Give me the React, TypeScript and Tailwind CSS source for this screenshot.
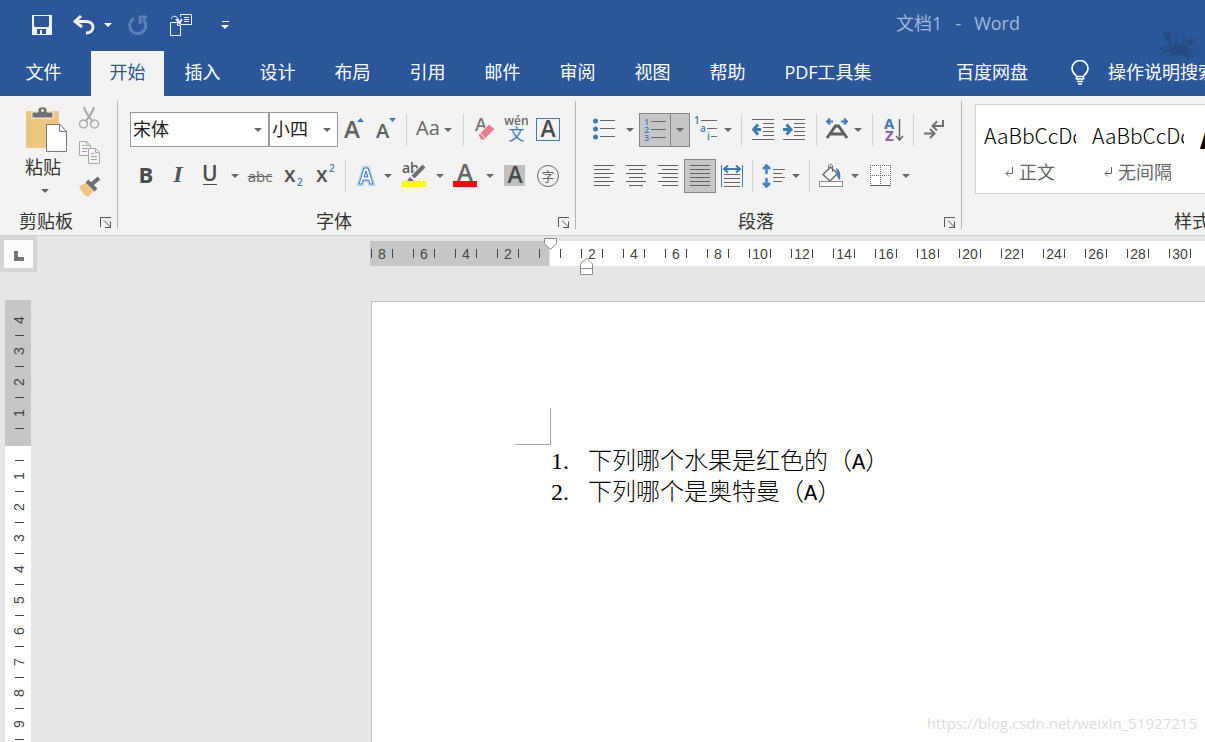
import type { ReactNode } from "react";
import clsx from "clsx";

const tabs = ["插入", "设计", "布局", "引用", "邮件", "审阅", "视图", "帮助"];

const rulerMarks = [
  "8", "", "6", "", "4", "", "2", "", "", "", "2", "", "4", "", "6", "", "8", "",
  "10", "", "12", "", "14", "", "16", "", "18", "", "20", "", "22", "", "24", "",
  "26", "", "28", "", "30", "", "32", "", "34", "", "36", "", "38", "", "40",
];

const questions = ["下列哪个水果是红色的", "下列哪个是奥特曼"];

const Caret = ({ className }: { className?: string }) => (
  <svg width="8" height="4" viewBox="0 0 8 4" className={clsx("shrink-0 fill-current", className)}>
    <path d="M0 0h8L4 4z" />
  </svg>
);

type ToolProps = {
  label: string;
  className?: string;
  active?: boolean;
  children: ReactNode;
};

const Tool = ({ label, className = "w-8", active, children }: ToolProps) => (
  <button
    type="button"
    title={label}
    aria-label={label}
    aria-pressed={active}
    className={clsx(
      "flex h-[34px] shrink-0 items-center justify-center text-[#666]",
      className,
      active && "border border-[#868686] bg-[#c6c6c6]",
    )}
  >
    {children}
  </button>
);

const CaretTool = ({ label, className = "w-3", active }: { label: string; className?: string; active?: boolean }) => (
  <Tool label={label} className={className} active={active}>
    <Caret />
  </Tool>
);

const Separator = ({ className }: { className: string }) => (
  <div className={clsx("flex h-8 shrink-0 justify-center", className)}>
    <i className="w-px bg-[#d0d0d0]" />
  </div>
);

const Lines = ({ rows }: { rows: [number, number][] }) => (
  <svg width="20" height="21" viewBox="0 0 20 21" shapeRendering="crispEdges" fill="#5f5f5f">
    {rows.map(([x, w], i) => (
      <rect key={i} x={x} y={i * 4} width={w} height="1" />
    ))}
  </svg>
);

const Launcher = ({ label }: { label: string }) => (
  <button type="button" aria-label={label} className="absolute right-[6px] top-[10px]">
    <svg width="12" height="11" viewBox="0 0 12 11" fill="none" stroke="#555">
      <path d="M.5 10V.5H11M4 3.500l6.500 6.500M10.500 4.500v6M5 10.500h6" />
    </svg>
  </button>
);

const Group = ({ name, launcher, className, children }: { name: string; launcher?: string; className: string; children: ReactNode }) => (
  <section aria-label={name} className={clsx("relative flex shrink-0 flex-col", className)}>
    <div className="flex-1">{children}</div>
    <footer className="relative flex h-7 items-center justify-center">
      <h2 className="text-lg leading-6 text-[#333]">{name}</h2>
      {launcher && <Launcher label={launcher} />}
    </footer>
    <i className="absolute right-0 top-[5px] h-32 w-px bg-[#b4b4b4]" />
  </section>
);

const TitleBar = () => (
  <header className="flex h-[51px] items-center overflow-hidden pb-[2px] pl-6 text-white">
    <button type="button" aria-label="保存" className="flex w-9 justify-center">
      <svg width="20" height="20" viewBox="0 0 20 20" fill="#f0f0f0" fillRule="evenodd">
        <path d="M0 0h20v20H0zM2 1v10l1 1h13l1-1V1zM5 14v5h3v-4h2v4h4v-5z" />
      </svg>
    </button>
    <button type="button" aria-label="撤消" className="ml-[6px] flex w-9 justify-center">
      <svg width="22" height="20" viewBox="0 0 22 20" fill="none" stroke="#f0f0f0" strokeWidth="3">
        <path d="M8 1 2 6.500 9 12M2.500 6.500H13c4 0 7 2 7 5.500s-3 6-7 6" />
      </svg>
    </button>
    <button type="button" aria-label="撤消选项" className="flex w-3 justify-center">
      <Caret />
    </button>
    <button type="button" aria-label="重复" className="ml-[6px] flex w-9 justify-center">
      <svg width="20" height="20" viewBox="0 0 20 20" fill="none" stroke="#5b7fb6" strokeWidth="3">
        <path d="M6 3.500A8 8 0 1 0 15 4.500M12 9V2h7" />
      </svg>
    </button>
    <button type="button" aria-label="粘贴并保留格式" className="ml-[7px] flex w-9 justify-center">
      <svg width="22" height="22" viewBox="0 0 22 22" fill="none" stroke="#f0f0f0">
        <path d="M10.500 3V.500h11v10h-11V9M14 3.500h5M14 5.500h5M14 7.500h5M8 8.500H.5v13h10v-10h-3v-3M1 5c1-4 7-4 8 2" />
        <path d="M6 5l3.500 4L12 5" strokeWidth="2" />
      </svg>
    </button>
    <button type="button" aria-label="自定义快速访问工具栏" className="ml-2 flex w-9 flex-col items-center gap-[3px]">
      <i className="h-px w-[7px] bg-white" />
      <Caret />
    </button>
    <h1 className="ml-auto flex gap-[13px] pb-1 pr-[185px] text-lg leading-6 text-[#a3b8d8]">
      <span>文档1</span>
      <span>-</span>
      <span>Word</span>
    </h1>
  </header>
);

const Crab = () => (
  <svg width="38" height="31" viewBox="0 0 38 31" className="absolute right-2 top-[30px] fill-[#264a82] stroke-[#264a82]">
    <path d="M11 26c0-9 4-14 11-12 6 2 8 6 5 13-5-4-11-4-16-1z" />
    <path d="M6 0c-3 5 0 9 4 11 3-3 2-7-1-10v5zM36 8c-1 5-4 8-9 7 0-4 3-6 6-7l-1 4z" stroke="none" />
    <path d="M9 10l4 6M28 14l-3 4M11 17c-4-1-7 0-10 2M11 20c-4 0-6 1-8 4M28 20c4 1 6 4 5 8M28 23c2 2 2 4 1 7" fill="none" strokeWidth="2" />
    <path d="M17 13V8M24 15l1-4" fill="none" />
    <circle cx="17" cy="6.500" r="2" fill="none" />
    <circle cx="25.500" cy="9.500" r="2" fill="none" />
  </svg>
);

const Tabs = () => (
  <nav className="flex h-[45px] gap-[2px] overflow-hidden whitespace-nowrap pl-[7px] text-lg leading-6 text-white">
    <button type="button" className="w-[73px] shrink-0 pb-[3px]">文件</button>
    <button type="button" className="ml-[9px] w-[73px] shrink-0 bg-[#f3f3f3] pb-[3px] text-[#2b579a]">开始</button>
    {tabs.map((tab) => (
      <button key={tab} type="button" className="w-[73px] shrink-0 pb-[3px]">
        {tab}
      </button>
    ))}
    <button type="button" className="w-[124px] shrink-0 pb-[3px]">PDF工具集</button>
    <button type="button" className="ml-[46px] w-[108px] shrink-0 pb-[3px]">百度网盘</button>
    <button type="button" className="ml-[23px] flex shrink-0 items-center gap-[19px] pb-[3px]">
      <svg width="18" height="25" viewBox="0 0 18 25" fill="none" stroke="currentColor" strokeWidth="1.600">
        <path d="M5.500 19v-3C3.500 14 1 12.500 1 8.500a8 8 0 0 1 16 0c0 4-2.500 5.500-4.500 7.500v3zM5.500 16.500h7M6 21.500h6M7 24h4" />
      </svg>
      操作说明搜索
    </button>
  </nav>
);

const Clipboard = () => (
  <Group name="剪贴板" launcher="剪贴板选项" className="w-[118px] [&_h2]:mr-[26px]">
    <div className="flex pl-6 pt-[9px]">
      <button type="button" className="flex w-11 flex-col items-start text-[#333]">
        <svg width="44" height="48" viewBox="0 0 44 48">
          <rect x="2" y="6" width="33" height="37" rx="1" fill="#eec77f" />
          <path d="M8 13V7h6V4l2-2h5l2 2v3h6v6z" fill="#6f6f6f" stroke="#f3f3f3" />
          <circle cx="18.500" cy="5.500" r="1.500" fill="#f3f3f3" />
          <path d="M22.500 19.500H36l6.500 7v20h-20z" fill="#fff" stroke="#777" />
          <path d="M35.500 19.500v7h7" fill="none" stroke="#777" />
        </svg>
        <span className="flex w-[38px] flex-col items-center gap-2 text-lg leading-7">
          粘贴
          <Caret className="ml-1 text-[#666]" />
        </span>
      </button>
      <div className="ml-[10px] flex flex-col gap-3">
        <button type="button" aria-label="剪切">
          <svg width="22" height="24" viewBox="0 0 22 24" fill="none" stroke="#a8a8a8" strokeWidth="1.500">
            <path d="M6 2c1 5 4 8 8 14l-1 1M16 2c-1 5-4 8-8 14l1 1" strokeWidth="2" />
            <circle cx="5.500" cy="19" r="4" />
            <circle cx="16.500" cy="19" r="4" />
          </svg>
        </button>
        <button type="button" aria-label="复制">
          <svg width="22" height="23" viewBox="0 0 22 23" fill="#f8f3f8" stroke="#aaa5aa">
            <path d="M1.500.5h7l4 4v10h-11zM8.500.5v4h4M4 4.500h3M4 7.500h6M4 10.500h5" />
            <path d="M10.500 7.500h7l4 4v11h-11zM17.500 7.500v4h4M13 12.500h3M13 15.500h6M13 18.500h6" />
          </svg>
        </button>
        <button type="button" aria-label="格式刷">
          <svg width="23" height="21" viewBox="0 0 23 21">
            <path d="M1 10l7-3 8 8-6 6C6 19 3 15 1 10z" fill="#eec586" />
            <path d="M9 5l9 9M13 9l8-7" fill="none" stroke="#6f6f6f" strokeWidth="4" />
          </svg>
        </button>
      </div>
    </div>
  </Group>
);

const letter = "overflow-visible font-['Open_Sans','Noto_Sans_CJK_SC',sans-serif] font-semibold";

type FontSelectProps = { label: string; value: string; options: string[]; className: string };

const FontSelect = ({ label, value, options, className }: FontSelectProps) => (
  <div className={clsx("relative shrink-0", className)}>
    <select
      aria-label={label}
      defaultValue={value}
      className="h-[35px] w-full appearance-none border border-[#999] bg-white pb-[2px] pl-[2px] text-lg leading-6 text-[#222]"
    >
      {options.map((option) => (
        <option key={option}>{option}</option>
      ))}
    </select>
    <Caret className="pointer-events-none absolute right-[7px] top-4 text-[#666]" />
  </div>
);

const FontGroup = () => (
  <Group name="字体" launcher="字体设置" className="w-[458px] [&_h2]:mr-[26px]">
    <div className="flex flex-col gap-[11px] pl-3 pt-4">
      <div className="flex h-[35px] items-center">
        <FontSelect label="字体" value="宋体" options={["宋体", "黑体", "楷体"]} className="w-[139px]" />
        <FontSelect label="字号" value="小四" options={["小四", "四号", "五号"]} className="w-[69px]" />
        <Tool label="增大字号">
          <svg width="20" height="24" viewBox="0 0 20 24" className={letter}>
            <text x="0" y="20" fontSize="24" fill="#5f5f5f">A</text>
            <path d="M13 4h7l-3.500-4z" fill="#3f7ab5" />
          </svg>
        </Tool>
        <Tool label="减小字号">
          <svg width="20" height="24" viewBox="0 0 20 24" className={letter}>
            <text x="0" y="20" fontSize="20" fill="#5f5f5f">A</text>
            <path d="M13 0h7l-3.500 4z" fill="#3f7ab5" />
          </svg>
        </Tool>
        <Separator className="w-[9px]" />
        <Tool label="更改大小写" className="w-[46px] gap-1">
          <span className="pb-1 font-['Open_Sans',sans-serif] text-xl font-medium leading-6">Aa</span>
          <Caret />
        </Tool>
        <Separator className="w-3" />
        <Tool label="清除所有格式">
          <svg width="20" height="24" viewBox="0 0 20 24" className={letter}>
            <text x="0" y="13" fontSize="18" fill="#777">A</text>
            <path d="M3 17 14 6l6 5-11 11H6z" fill="#e87d92" stroke="#f3f3f3" />
            <path d="m5 15 6 6" stroke="#f3f3f3" />
          </svg>
        </Tool>
        <Tool label="拼音指南" className="w-[31px]">
          <span className="flex flex-col items-center pb-[2px]">
            <span className="font-['Open_Sans',sans-serif] text-xs font-semibold leading-[10px]">wén</span>
            <span className="text-base leading-4 text-[#3f7ab5]">文</span>
          </span>
        </Tool>
        <Tool label="字符边框">
          <svg width="24" height="26" viewBox="0 0 24 26" className={letter}>
            <rect x=".5" y="1.500" width="23" height="22" fill="none" stroke="#3f7ab5" />
            <text x="12" y="20" fontSize="23" textAnchor="middle" fill="#4a4a4a">A</text>
          </svg>
        </Tool>
      </div>
      <div className="flex h-[35px] items-center">
        <Tool label="加粗">
          <b className="pb-1 font-['Open_Sans',sans-serif] text-[22px] leading-6 text-[#4a4a4a]">B</b>
        </Tool>
        <Tool label="倾斜">
          <i className="pb-1 font-['Liberation_Serif',serif] text-2xl font-bold leading-6 text-[#555]">I</i>
        </Tool>
        <Tool label="下划线">
          <svg width="16" height="22" viewBox="0 0 16 22" className={letter}>
            <text x="0" y="16" fontSize="21" fill="#4a4a4a">U</text>
            <rect x="1" y="19" width="14" height="1" fill="#4a4a4a" />
          </svg>
        </Tool>
        <CaretTool label="下划线样式" className="w-[18px]" />
        <Tool label="删除线">
          <s className="font-['Open_Sans',sans-serif] text-[15px] leading-6">abc</s>
        </Tool>
        <Tool label="下标">
          <svg width="20" height="24" viewBox="0 0 20 24" className={letter}>
            <text x="2" y="18" fontSize="21" fill="#555">x</text>
            <text x="15" y="22" fontSize="10" fill="#3f7ab5">2</text>
          </svg>
        </Tool>
        <Tool label="上标">
          <svg width="20" height="24" viewBox="0 0 20 24" className={letter}>
            <text x="2" y="18" fontSize="21" fill="#555">x</text>
            <text x="15" y="8" fontSize="10" fill="#3f7ab5">2</text>
          </svg>
        </Tool>
        <Separator className="w-[10px]" />
        <Tool label="文本效果和版式">
          <svg width="24" height="26" viewBox="0 0 24 26">
            <path d="M5 21 10 5h4l5 16h-3l-1-4H9l-1 4zM10 14h4l-2-6z" fill="#fff" stroke="#b8d3ef" strokeWidth="4" />
            <path d="M5 21 10 5h4l5 16h-3l-1-4H9l-1 4zM10 14h4l-2-6z" fill="#fff" stroke="#3f7ac0" />
          </svg>
        </Tool>
        <CaretTool label="文本效果选项" />
        <Tool label="文本突出显示颜色" className="w-10">
          <svg width="24" height="24" viewBox="0 0 24 24" className={letter}>
            <text x="0" y="9" fontSize="14" fill="#555">ab</text>
            <path d="M21 2 11 13" stroke="#f3f3f3" strokeWidth="6" />
            <path d="M22 2 11 13" stroke="#6f6f6f" strokeWidth="4" />
            <path d="m8 13 4 4H5z" fill="#6f6f6f" />
            <rect y="17" width="24" height="6" fill="#ff0" />
          </svg>
        </Tool>
        <CaretTool label="突出显示颜色选项" />
        <Tool label="字体颜色" className="w-[38px]">
          <svg width="24" height="24" viewBox="0 0 24 24" className={letter}>
            <text x="12" y="17" fontSize="24" textAnchor="middle" fill="#666">A</text>
            <rect y="17" width="24" height="6" fill="#f00" />
          </svg>
        </Tool>
        <CaretTool label="字体颜色选项" />
        <Tool label="字符底纹" className="w-[38px]">
          <svg width="22" height="24" viewBox="0 0 22 24" className={letter}>
            <rect y="1" width="21" height="21" fill="#c0c0c0" />
            <text x="11" y="19" fontSize="23" textAnchor="middle" fill="#4a4a4a">A</text>
          </svg>
        </Tool>
        <Tool label="带圈字符" className="w-7">
          <span className="flex h-[22px] w-[22px] items-center justify-center rounded-full border border-[#666] text-[13px] leading-5">
            字
          </span>
        </Tool>
      </div>
    </div>
  </Group>
);

const Indent = ({ arrow }: { arrow: string }) => (
  <svg width="22" height="21" viewBox="0 0 22 21">
    <path d="M0 .5h22M11 4.500h11M11 8.500h11M11 12.500h11M11 16.500h11M0 20.500h22" stroke="#666" />
    <path d={arrow} fill="none" stroke="#3f7ab5" strokeWidth="3" />
  </svg>
);

const Paragraph = () => (
  <Group name="段落" launcher="段落设置" className="w-[386px] [&_h2]:mr-[26px]">
    <div className="flex flex-col gap-[11px] pl-3 pt-4">
      <div className="flex h-[35px] items-center">
        <Tool label="项目符号">
          <svg width="24" height="24" viewBox="0 0 24 24">
            {[3, 11, 19].map((y) => (
              <g key={y}>
                <circle cx="3.500" cy={y} r="2.500" fill="#3f7ab5" />
                <path d={`M8 ${y - 0.5}h15`} stroke="#666" />
              </g>
            ))}
          </svg>
        </Tool>
        <CaretTool label="项目符号库" className="w-[19px]" />
        <Tool label="编号" active>
          <svg width="22" height="26" viewBox="0 0 22 26" className="font-['Open_Sans',sans-serif]">
            {[1, 2, 3].map((n) => (
              <g key={n}>
                <text x="0" y={n * 8} fontSize="9" fontWeight="600" fill="#3f7ab5">{n}</text>
                <path d={`M7 ${n * 8 - 3.5}h15`} stroke="#666" />
              </g>
            ))}
          </svg>
        </Tool>
        <CaretTool label="编号库" className="-ml-px w-5" active />
        <Tool label="多级列表">
          <svg width="24" height="24" viewBox="0 0 24 24" className={letter}>
            <g fontSize="10" fill="#3f7ab5">
              <text x="0" y="6">1</text>
              <text x="6" y="14">a</text>
              <text x="13" y="22">i</text>
            </g>
            <path d="M7 2.500h16M13 10.500h10M17 18.500h6" stroke="#666" />
          </svg>
        </Tool>
        <CaretTool label="多级列表库" />
        <Separator className="w-[14px]" />
        <Tool label="减少缩进量" className="w-[30px]">
          <Indent arrow="M9 10.500H2M6 5.500l-4.500 5 4.500 5" />
        </Tool>
        <Tool label="增加缩进量">
          <Indent arrow="M0 10.500h7M3.500 5.500l4.500 5-4.500 5" />
        </Tool>
        <Separator className="w-3" />
        <Tool label="中文版式" className="w-[30px]">
          <svg width="24" height="24" viewBox="0 0 24 24">
            <path d="M2 20 10.500 8h3L22 20M6 16h12" fill="none" stroke="#5f5f5f" strokeWidth="3" />
            <path d="M8 3.500H2M5 .5l-3 3 3 3M16 3.500h6M19 .5l3 3-3 3" fill="none" stroke="#3f7ab5" strokeWidth="2" />
          </svg>
        </Tool>
        <CaretTool label="中文版式选项" />
        <Separator className="w-4" />
        <Tool label="排序" className="w-7">
          <svg width="20" height="26" viewBox="0 0 20 26" className={letter}>
            <text x="0" y="12" fontSize="15" fontWeight="700" fill="#3f7ab5">A</text>
            <text x="1" y="24" fontSize="15" fontWeight="700" fill="#8c57ab">Z</text>
            <path d="M15.500 2v21M12 19l3.500 4 3.500-4" fill="none" stroke="#666" strokeWidth="1.500" />
          </svg>
        </Tool>
        <Separator className="w-[10px]" />
        <Tool label="显示编辑标记">
          <svg width="22" height="22" viewBox="0 0 22 22" fill="none" stroke="#6f6f6f" strokeWidth="2">
            <path d="M20 1v6H10M14 2.500 9.500 7l4.500 4.500M1 14.500h10M7 10l4.500 4.500L7 19" />
          </svg>
        </Tool>
      </div>
      <div className="flex h-[35px] items-center">
        <Tool label="左对齐">
          <Lines rows={[[0, 20], [0, 16], [0, 20], [0, 16], [0, 20], [0, 16]]} />
        </Tool>
        <Tool label="居中">
          <Lines rows={[[0, 20], [3, 14], [0, 20], [3, 14], [0, 20], [3, 14]]} />
        </Tool>
        <Tool label="右对齐">
          <Lines rows={[[0, 20], [4, 16], [0, 20], [4, 16], [0, 20], [4, 16]]} />
        </Tool>
        <Tool label="两端对齐" active>
          <Lines rows={[[0, 20], [0, 20], [0, 20], [0, 20], [0, 20], [0, 20]]} />
        </Tool>
        <Tool label="分散对齐">
          <svg width="22" height="22" viewBox="0 0 22 22" fill="none">
            <path d="M3 9.500h16M3 13.500h16M3 17.500h16M3 21.500h16" stroke="#666" />
            <path d="M.5 0v22M21.500 0v22" stroke="#3f7ab5" />
            <path d="M3 4h16M7 .5 3 4l4 3.500M15 .5 19 4l-4 3.500" stroke="#3f7ab5" strokeWidth="2" />
          </svg>
        </Tool>
        <Separator className="w-2" />
        <Tool label="行和段落间距" className="w-[34px]">
          <svg width="23" height="24" viewBox="0 0 23 24" fill="none">
            <path d="M11 5.500h12M11 9.500h9M11 13.500h12M11 17.500h9" stroke="#666" />
            <path d="M4.500 2v8M1 5l3.500-3.500L8 5M4.500 14v8M1 19l3.500 3.500L8 19" stroke="#4a7fc4" strokeWidth="2.500" />
          </svg>
        </Tool>
        <CaretTool label="行距选项" />
        <Separator className="w-[14px]" />
        <Tool label="底纹" className="w-[30px]">
          <svg width="24" height="25" viewBox="0 0 24 25" fill="none">
            <path d="M17 5c4 2 5 6 4 12-2-1-3-3-3-6z" fill="#3f7ab5" />
            <path d="M4 11.500 11.500 4l7 6.500L11 18z" fill="#f8f8f8" stroke="#6f6f6f" strokeWidth="1.500" />
            <path d="M9.500 7V2.500q2-3 4 0V9" stroke="#6f6f6f" />
            <rect x=".5" y="18.500" width="23" height="5" fill="#fff" stroke="#8a8a8a" />
          </svg>
        </Tool>
        <CaretTool label="底纹颜色" className="w-[18px]" />
        <Tool label="边框">
          <svg width="21" height="21" viewBox="0 0 21 21" shapeRendering="crispEdges">
            <rect width="21" height="21" fill="#fff" />
            <path d="M0 .5h21M.5 0v20M10.500 0v20M20.500 0v20M0 10.500h21" stroke="#666" strokeDasharray="1 1" />
            <path d="M0 20.500h21" stroke="#555" />
          </svg>
        </Tool>
        <CaretTool label="边框选项" className="w-5" />
      </div>
    </div>
  </Group>
);

type StyleCardProps = { sample: string; name: string; className?: string };

const StyleCard = ({ sample, name, className = "text-[21px] font-light" }: StyleCardProps) => (
  <button type="button" className="flex w-[108px] shrink-0 flex-col px-2 pt-[14px]">
    <span className={clsx("h-8 w-full overflow-hidden whitespace-nowrap text-left font-['Noto_Sans_CJK_SC',sans-serif] leading-8 text-black", className)}>
      {sample}
    </span>
    <span className="flex w-full items-center justify-center gap-[6px] pt-[5px] text-lg leading-8 text-[#666]">
      <svg width="8" height="10" viewBox="0 0 8 10" fill="none" stroke="currentColor">
        <path d="M7.500 0v6.500H1M4 3.500l-3 3 3 3" />
      </svg>
      {name}
    </span>
  </button>
);

const Styles = () => (
  <section aria-label="样式" className="flex min-w-0 flex-1 flex-col overflow-hidden pl-[13px]">
    <div className="flex-1 pt-2">
      <div className="flex h-[90px] overflow-hidden border border-r-0 border-[#cfcfcf] bg-white">
        <StyleCard sample="AaBbCcDd" name="正文" />
        <StyleCard sample="AaBbCcDd" name="无间隔" />
        <StyleCard sample="AaBl" name="标题 1" className="text-[32px] font-bold" />
      </div>
    </div>
    <footer className="flex h-7 items-center pl-[199px]">
      <h2 className="whitespace-nowrap text-lg leading-6 text-[#333]">样式</h2>
    </footer>
  </section>
);

const HorizontalMark = ({ text }: { text: string }) => (
  <span className="flex w-[21px] shrink-0 items-center">
    <i className="h-[9px] w-px bg-[#444]" />
    <span className="flex-1 text-center">{text}</span>
  </span>
);

const HorizontalRuler = () => (
  <div className="relative ml-[333px] mt-[5px] h-[25px] font-['Liberation_Sans',sans-serif] text-sm leading-6 text-[#444]">
    <div className="flex h-full overflow-hidden bg-[linear-gradient(90deg,#c6c6c6_179px,#fff_180px)] pl-px">
      {rulerMarks.map((mark, i) => (
        <HorizontalMark key={i} text={mark} />
      ))}
    </div>
    <svg width="13" height="12" viewBox="0 0 13 12" className="absolute -top-[3px] left-[174px]" fill="#fff" stroke="#8a8a8a">
      <path d="M.5.5h12v5l-6 6-6-6z" />
    </svg>
    <svg width="13" height="18" viewBox="0 0 13 18" className="absolute left-[210px] top-4" fill="#fff" stroke="#8a8a8a">
      <path d="M.5 17.500V7l6-6 6 6v10.500zM.5 11.500h12" />
    </svg>
  </div>
);

const VerticalMark = ({ text }: { text: string }) => (
  <span className="flex h-[31px] shrink-0 flex-col items-center">
    <span className="flex flex-1 items-center justify-center">
      <span className="-rotate-90 leading-[18px]">{text}</span>
    </span>
    <i className="h-px w-[9px] bg-[#444]" />
  </span>
);

const VerticalRuler = () => (
  <div className="ml-[5px] mt-7 flex w-[26px] flex-1 flex-col bg-white font-['Liberation_Sans',sans-serif] text-sm text-[#444]">
    <div className="flex h-[146px] flex-col bg-[#c6c6c6] pl-[2px] pt-[5px]">
      {["4", "3", "2", "1"].map((mark) => (
        <VerticalMark key={mark} text={mark} />
      ))}
    </div>
    <div className="flex flex-col items-center pl-[2px] pt-[14px]">
      <i className="h-px w-[9px] bg-[#444]" />
      {["1", "2", "3", "4", "5", "6", "7", "8", "9"].map((mark) => (
        <VerticalMark key={mark} text={mark} />
      ))}
    </div>
  </div>
);

const Page = () => (
  <article className="ml-[334px] mt-[35px] flex-1 border-l border-t border-[#c0c0c0] bg-white pl-[143px] pt-[106px]">
    <div className="h-[37px] w-9 border-b border-r border-[#a6a6a6]" />
    <ol className="ml-9 font-['Noto_Sans_CJK_SC',sans-serif] text-2xl font-light leading-7 text-black">
      {questions.map((question, i) => (
        <li key={question} className="flex h-[31px] items-baseline whitespace-nowrap">
          <span className="w-[37px] font-['Liberation_Serif',serif]">{i + 1}.</span>
          <span>
            {question}（<span className="font-['Liberation_Mono',monospace] text-[22px] font-normal leading-6">A</span>）
          </span>
        </li>
      ))}
    </ol>
  </article>
);

export default function App() {
  return (
    <div className="relative flex min-h-screen flex-col overflow-hidden bg-[#e6e6e6] font-['Open_Sans','Noto_Sans_CJK_SC',sans-serif]">
      <div className="relative bg-[#2b579a]">
        <TitleBar />
        <Tabs />
        <Crab />
      </div>
      <div className="flex h-[140px] overflow-hidden border-b border-[#cfcfcf] bg-[#f3f3f3]">
        <Clipboard />
        <FontGroup />
        <Paragraph />
        <Styles />
      </div>
      <main className="flex flex-1">
        <div className="flex w-[37px] shrink-0 flex-col">
          <div className="h-9 bg-[#d5d5d5] p-1">
            <button type="button" aria-label="制表符类型" className="flex h-7 w-[29px] items-center justify-center bg-[#fcfcfc] pt-1">
              <i className="h-[10px] w-[10px] border-b-4 border-l-4 border-[#757575]" />
            </button>
          </div>
          <VerticalRuler />
        </div>
        <div className="flex min-w-0 flex-1 flex-col">
          <HorizontalRuler />
          <Page />
        </div>
      </main>
      <a href="https://blog.csdn.net/weixin_51927215" className="absolute bottom-[7px] right-2 text-[15px] leading-6 text-[#dcdcdc]">
        https://blog.csdn.net/weixin_51927215
      </a>
    </div>
  );
}
